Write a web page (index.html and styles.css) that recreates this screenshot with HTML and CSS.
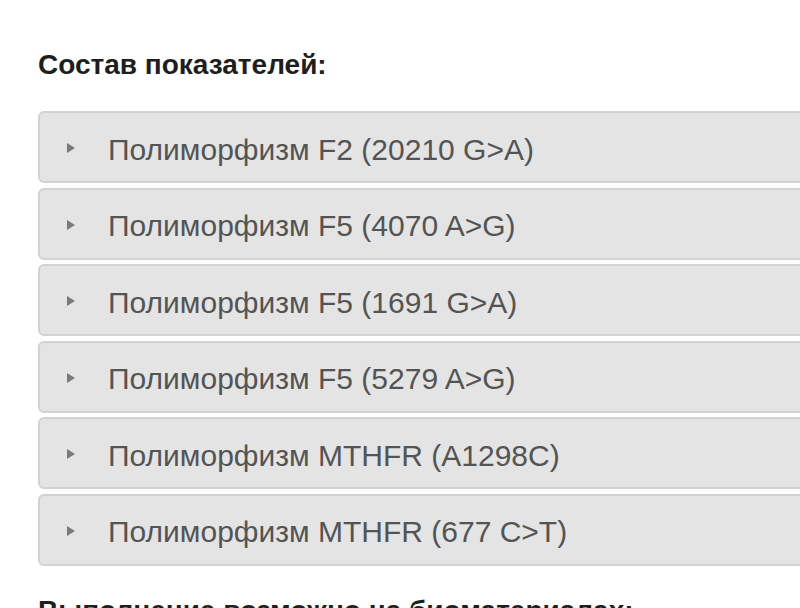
FILE: index.html
```html
<!DOCTYPE html>
<html lang="ru">
<head>
<meta charset="utf-8">
<link rel="stylesheet" href="styles.css">
</head>
<body>
<div class="page">
  <h2 class="title">Состав показателей:</h2>
  <div class="list">
    <div class="item"><span class="arrow"></span><span class="label">Полиморфизм F2 (20210 G&gt;A)</span></div>
    <div class="item"><span class="arrow"></span><span class="label">Полиморфизм F5 (4070 A&gt;G)</span></div>
    <div class="item"><span class="arrow"></span><span class="label">Полиморфизм F5 (1691 G&gt;A)</span></div>
    <div class="item"><span class="arrow"></span><span class="label">Полиморфизм F5 (5279 A&gt;G)</span></div>
    <div class="item"><span class="arrow"></span><span class="label">Полиморфизм MTHFR (A1298C)</span></div>
    <div class="item"><span class="arrow"></span><span class="label">Полиморфизм MTHFR (677 C&gt;T)</span></div>
  </div>
  <h2 class="title">Выполнение возможно на биоматериалах:</h2>
</div>
</body>
</html>
```
FILE: styles.css
```css
html, body {
  margin: 0;
  padding: 0;
  background: #fff;
  overflow: hidden;
}
.page {
  padding: 45px 0 0 38px;
  font-family: "Liberation Sans", Arial, sans-serif;
  width: 800px;
  box-sizing: border-box;
}
.title {
  margin: 0;
  font-size: 28px;
  font-weight: bold;
  color: #1e1e1e;
  line-height: 40px;
  white-space: nowrap;
}
.list {
  margin: 26px 0 25px;
  width: 790px;
  display: flex;
  flex-direction: column;
  gap: 4.6px;
}
.item {
  height: 72px;
  box-sizing: border-box;
  background: #e4e4e4;
  border: 2px solid #d2d2d2;
  border-radius: 6px;
  display: flex;
  align-items: center;
  padding: 5px 0 0 27px;
}
.arrow {
  width: 0;
  height: 0;
  border-top: 5.5px solid transparent;
  border-bottom: 5.5px solid transparent;
  border-left: 8px solid #7a7a7a;
  margin: -3px 33px 0 0;
}
.label {
  font-size: 30px;
  color: #545454;
  white-space: nowrap;
}
```
